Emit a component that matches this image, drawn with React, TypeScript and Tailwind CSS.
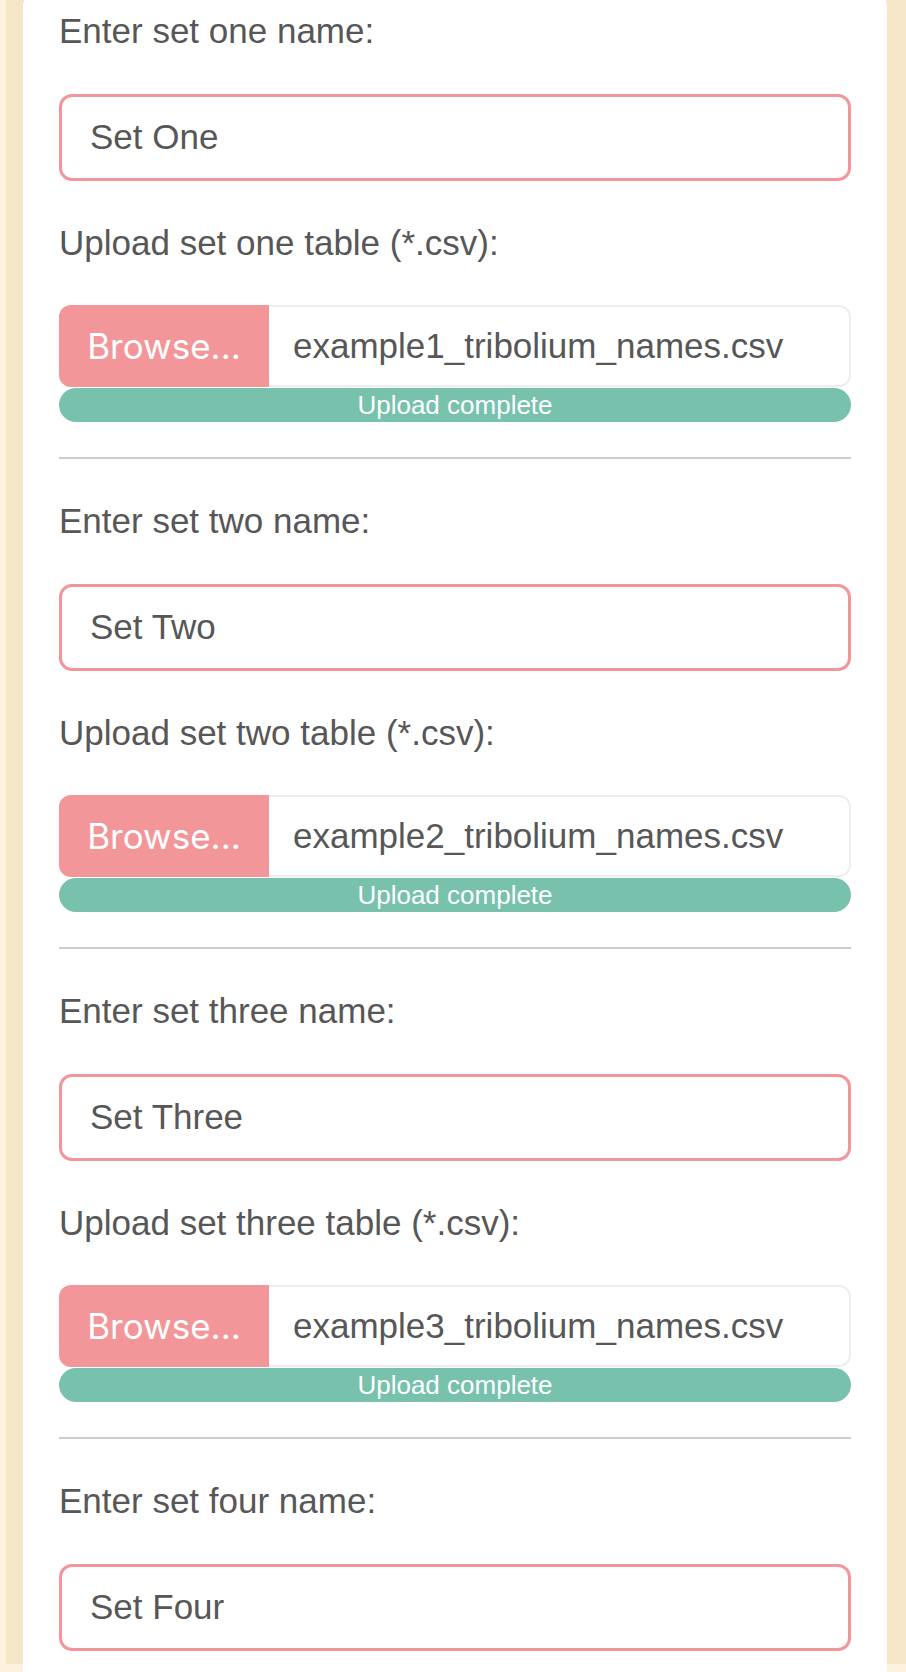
import React from "react";

const sets = [
  { word: "one", name: "Set One", file: "example1_tribolium_names.csv", upload: true },
  { word: "two", name: "Set Two", file: "example2_tribolium_names.csv", upload: true },
  { word: "three", name: "Set Three", file: "example3_tribolium_names.csv", upload: true },
  { word: "four", name: "Set Four", file: "", upload: false },
];

function Section({ s, first }: { s: (typeof sets)[number]; first: boolean }) {
  return (
    <div className={first ? "" : "mt-[37px]"}>
      <div className="text-[35px] leading-[50px] text-[#575757]">Enter set {s.word} name:</div>
      <div className="mt-[38px] h-[87px] border-[3px] border-[#f3969a] rounded-[13px] flex items-center px-[28px] text-[35px] text-[#575757]">
        {s.name}
      </div>
      {s.upload && (
        <>
          <div className="mt-[37px] text-[35px] leading-[50px] text-[#575757]">
            Upload set {s.word} table (*.csv):
          </div>
          <div className="mt-[37px] flex h-[82px]">
            <div className="w-[210px] shrink-0 bg-[#f3969a] rounded-l-[12px] flex items-center justify-center text-white text-[35px] font-['Inter',sans-serif]">
              Browse...
            </div>
            <div className="flex-1 border-2 border-l-0 border-[#eeeeee] rounded-r-[12px] flex items-center pl-[24px] text-[35px] text-[#575757]">
              {s.file}
            </div>
          </div>
          <div className="mt-[1px] h-[34px] rounded-full bg-[#78c2ad] text-white text-[26px] flex items-center justify-center">
            Upload complete
          </div>
          <div className="mt-[35px] h-[2px] bg-[#cccccc]" />
        </>
      )}
    </div>
  );
}

export default function App() {
  return (
    <div className="h-[1672px] overflow-hidden bg-[#fdf2de] pl-[6px] font-['Liberation_Sans',Arial,sans-serif]">
      <div className="h-full bg-[#f5e6c8] pl-[17px] pr-[19px]">
        <div className="mt-[-8px] bg-white rounded-[14px] px-[36px] pt-[14px] pb-[200px]">
          {sets.map((s, i) => (
            <Section key={s.word} s={s} first={i === 0} />
          ))}
        </div>
      </div>
    </div>
  );
}
